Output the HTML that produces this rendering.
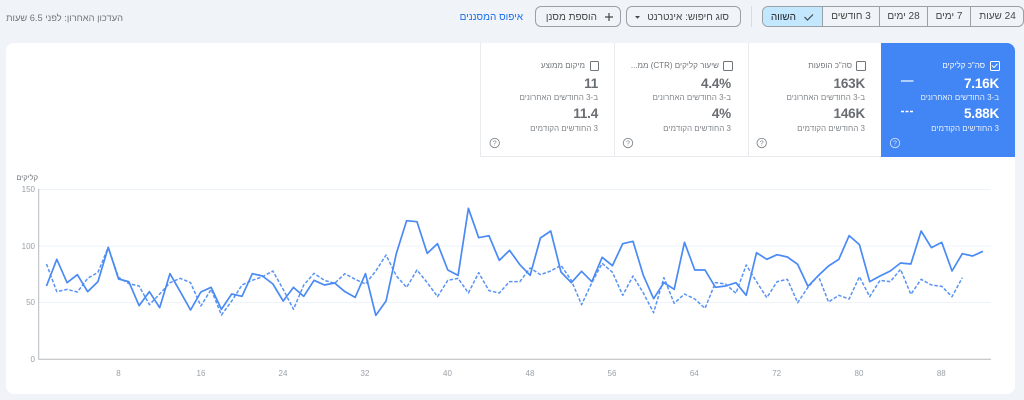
<!DOCTYPE html>
<html lang="he" dir="rtl">
<head>
<meta charset="utf-8">
<title>Performance</title>
<style>
html,body{margin:0;padding:0}
body{width:1024px;height:400px;overflow:hidden;position:relative;background:#f0f4f9;font-family:"Liberation Sans","DejaVu Sans",sans-serif;color:#5f6368}
#w{position:absolute;left:0;top:0;width:1024px;height:400px;filter:blur(.35px)}
.a{position:absolute;white-space:nowrap}
.card{position:absolute;left:6px;top:43px;width:1009px;height:351px;background:#fff;border-radius:8px}
.seg{position:absolute;top:6px;height:21px;line-height:22px;text-align:center;font-size:10px;color:#444746;box-sizing:border-box}
.group{position:absolute;left:762px;top:6px;width:262px;height:21px;border:1px solid #9aa0a6;border-radius:6px;box-sizing:border-box}
.btn{position:absolute;top:6px;height:21px;box-sizing:border-box;border:1px solid #9aa0a6;border-radius:6px}
.t{position:absolute;text-align:right;white-space:nowrap;direction:rtl}
.tile{position:absolute;top:43px;height:114px;box-sizing:border-box;border-bottom:1px solid #e8eaed;border-left:1px solid #e8eaed}
.lab{font-size:8px;line-height:12px;color:#70757a;margin-top:1px}
.val{font-size:13.500px;letter-spacing:-.2px;line-height:16px;font-weight:bold;color:#696d72}
.sub{font-size:8px;line-height:12px;color:#80868b;margin-top:1px}
.cb{position:absolute;width:7.500px;height:7.500px;top:61px;border:1px solid #70757a;border-radius:1.500px;box-sizing:content-box}
.tk{position:absolute;font-size:8px;color:#9aa0a6;direction:ltr;line-height:12px;margin-top:1px}
svg{position:absolute;left:0;top:0}
</style>
</head>
<body>
<div id="w">
<div class="a" style="left:0;top:11px;font-size:9.300px;line-height:14px;color:#70757a;width:123px;text-align:right">העדכון האחרון: לפני 6.5 שעות</div>
<div class="a" style="left:450px;top:11px;font-size:10px;line-height:14px;color:#1a6ee8;width:73px;text-align:right">איפוס המסננים</div>

<div class="btn" style="left:535px;width:86px"></div>
<div class="a" style="left:540px;top:10px;font-size:10px;line-height:14px;color:#444746;width:57px;text-align:right;margin-top:1px">הוספת מסנן</div>
<div class="btn" style="left:626px;width:115px"></div>
<div class="a" style="left:640px;top:10px;font-size:10px;line-height:14px;color:#444746;width:89px;text-align:right;margin-top:1px">סוג חיפוש: אינטרנט</div>

<div style="position:absolute;left:751px;top:6px;width:1px;height:21px;background:#dadce0"></div>

<div class="group"></div>
<div class="seg" style="left:763px;top:7px;width:59px;height:19px;background:#c2e7ff;border-radius:5px 0 0 5px"></div>
<div class="a" style="left:766px;top:10px;font-size:10px;line-height:14px;color:#202124;width:30px;text-align:right;margin-top:1px">השווה</div>
<div class="seg" style="left:822px;width:57px;border-left:1px solid #9aa0a6">3 חודשים</div>
<div class="seg" style="left:879px;width:48px;border-left:1px solid #9aa0a6">28 ימים</div>
<div class="seg" style="left:927px;width:43px;border-left:1px solid #9aa0a6">7 ימים</div>
<div class="seg" style="left:970px;width:54px;border-left:1px solid #9aa0a6">24 שעות</div>

<div class="card"></div>
<div class="tile" style="left:480px;width:135px;border-right:0"></div>
<div class="tile" style="left:614px;width:135px"></div>
<div class="tile" style="left:748px;width:134px"></div>
<div style="position:absolute;left:881px;top:43px;width:134px;height:114px;background:#4285f4;border-radius:0 8px 0 0"></div>

<div class="cb" style="left:990px;border-color:#fff"></div>
<div class="t lab" style="right:39px;top:59px;color:#fff">סה"כ קליקים</div>
<div class="t val" style="right:25px;top:76px;color:#fff">7.16K</div>
<div class="t sub" style="right:25px;top:91px;color:#e8f0fe">ב-3 החודשים האחרונים</div>
<div class="t val" style="right:25px;top:106px;color:#fff">5.88K</div>
<div class="t sub" style="right:25px;top:122px;color:#e8f0fe">3 החודשים הקודמים</div>

<div class="cb" style="left:856px"></div>
<div class="t lab" style="right:172px;top:59px">סה"כ הופעות</div>
<div class="t val" style="right:159px;top:76px">163K</div>
<div class="t sub" style="right:159px;top:91px">ב-3 החודשים האחרונים</div>
<div class="t val" style="right:159px;top:106px">146K</div>
<div class="t sub" style="right:159px;top:122px">3 החודשים הקודמים</div>

<div class="cb" style="left:723px"></div>
<div class="t lab" style="right:305px;top:59px">שיעור קליקים (CTR) ממ...</div>
<div class="t val" style="right:293px;top:76px">4.4%</div>
<div class="t sub" style="right:293px;top:91px">ב-3 החודשים האחרונים</div>
<div class="t val" style="right:293px;top:106px">4%</div>
<div class="t sub" style="right:293px;top:122px">3 החודשים הקודמים</div>

<div class="cb" style="left:589.500px"></div>
<div class="t lab" style="right:439px;top:59px">מיקום ממוצע</div>
<div class="t val" style="right:426px;top:76px">11</div>
<div class="t sub" style="right:426px;top:91px">ב-3 החודשים האחרונים</div>
<div class="t val" style="right:426px;top:106px">11.4</div>
<div class="t sub" style="right:426px;top:122px">3 החודשים הקודמים</div>

<svg width="1024" height="400" viewBox="0 0 1024 400" fill="none">
  <!-- button icons -->
  <path d="M605 17h8M609 13v8" stroke="#444746" stroke-width="1.200"/>
  <path d="M635 16h5l-2.500 2.800z" fill="#444746"/>
  <path d="M804.500 17l3 3 5.500-5.500" stroke="#444746" stroke-width="1.200"/>
  <!-- check -->
  <path d="M992 65.500l2 2 3.500-3.700" stroke="#fff" stroke-width="1"/>
  <!-- legend -->
  <path d="M901 81h12.500" stroke="#fff" stroke-width="1.200"/>
  <path d="M901 111.500h3M905.500 111.500h3M910 111.500h3" stroke="#fff" stroke-width="1.400"/>
  <!-- help icons -->
  <g stroke-width="0.900" font-family="Liberation Sans, sans-serif" font-size="7" text-anchor="middle">
    <circle cx="895" cy="143" r="4.700" stroke="#cfe0fc"/><text x="895" y="145.500" fill="#cfe0fc">?</text>
    <circle cx="761.700" cy="143" r="4.700" stroke="#80868b"/><text x="761.700" y="145.500" fill="#80868b">?</text>
    <circle cx="628" cy="143" r="4.700" stroke="#80868b"/><text x="628" y="145.500" fill="#80868b">?</text>
    <circle cx="494.700" cy="143" r="4.700" stroke="#80868b"/><text x="494.700" y="145.500" fill="#80868b">?</text>
  </g>
  <!-- chart grid -->
  <path d="M39 189.500H991M39 246H991M39 302.500H991" stroke="#eef3fb" stroke-width="1"/>
  <path d="M38.700 189V359.500M38.700 359.300H991" stroke="#b5b9be" stroke-width="1"/>
  <!-- series -->
  <g transform="translate(36.210,170) scale(10.290,0.33333)" stroke="#4a8af4" stroke-linejoin="round">
    <polyline vector-effect="non-scaling-stroke" stroke-width="1.500" stroke-dasharray="3.500 1.800" opacity=".92" points="1,282 2,365 3,358 4,366 5,325 6,307 7,232 8,322 9,341 10,348 11,404 12,372 13,338 14,325 15,338 16,408 17,358 18,435 19,393 20,345 21,331 22,320 23,303 24,358 25,418 26,345 27,310 28,331 29,340 30,311 31,328 32,342 33,303 34,255 35,318 36,352 37,300 38,338 39,380 40,331 41,325 42,369 43,308 44,362 45,369 46,335 47,335 48,294 49,314 50,303 51,286 52,331 53,404 54,338 55,280 56,307 57,376 58,318 59,369 60,428 61,323 62,400 63,372 64,387 65,415 66,338 67,342 68,370 69,285 70,335 71,383 72,335 73,328 74,398 75,352 76,317 77,396 78,376 79,387 80,320 81,380 82,331 83,335 84,298 85,373 86,328 87,345 88,349 89,380 90,323"/>
    <polyline vector-effect="non-scaling-stroke" stroke-width="1.700" points="1,348 2,268 3,338 4,314 5,365 6,335 7,232 8,327 9,335 10,407 11,365 12,413 13,311 14,365 15,420 16,366 17,352 18,418 19,372 20,379 21,311 22,318 23,342 24,393 25,352 26,379 27,331 28,345 29,339 30,365 31,382 32,311 33,436 34,393 35,250 36,152 37,155 38,250 39,221 40,300 41,316 42,115 43,203 44,197 45,271 46,241 47,284 48,316 49,204 50,183 51,306 52,338 53,304 54,335 55,262 56,287 57,221 58,214 59,316 60,386 61,338 62,358 63,217 64,300 65,300 66,352 67,348 68,338 69,376 70,248 71,268 72,254 73,261 74,283 75,349 76,317 77,288 78,268 79,197 80,224 81,335 82,318 83,303 84,279 85,282 86,183 87,233 88,217 89,303 90,251 91,258 92,244"/>
  </g>
</svg>

<div class="t" style="right:986px;top:172px;font-size:7.500px;line-height:12px;color:#70757a">קליקים</div>
<div class="tk" style="left:14px;width:21px;text-align:right;top:183px">150</div>
<div class="tk" style="left:14px;width:21px;text-align:right;top:240px">100</div>
<div class="tk" style="left:14px;width:21px;text-align:right;top:296px">50</div>
<div class="tk" style="left:14px;width:21px;text-align:right;top:353px">0</div>
<div class="tk" style="left:108.500px;width:20px;text-align:center;top:367px">8</div>
<div class="tk" style="left:191px;width:20px;text-align:center;top:367px">16</div>
<div class="tk" style="left:273px;width:20px;text-align:center;top:367px">24</div>
<div class="tk" style="left:355px;width:20px;text-align:center;top:367px">32</div>
<div class="tk" style="left:437.500px;width:20px;text-align:center;top:367px">40</div>
<div class="tk" style="left:520px;width:20px;text-align:center;top:367px">48</div>
<div class="tk" style="left:602px;width:20px;text-align:center;top:367px">56</div>
<div class="tk" style="left:684.300px;width:20px;text-align:center;top:367px">64</div>
<div class="tk" style="left:766.700px;width:20px;text-align:center;top:367px">72</div>
<div class="tk" style="left:849px;width:20px;text-align:center;top:367px">80</div>
<div class="tk" style="left:931.300px;width:20px;text-align:center;top:367px">88</div>
</div>
</body>
</html>
